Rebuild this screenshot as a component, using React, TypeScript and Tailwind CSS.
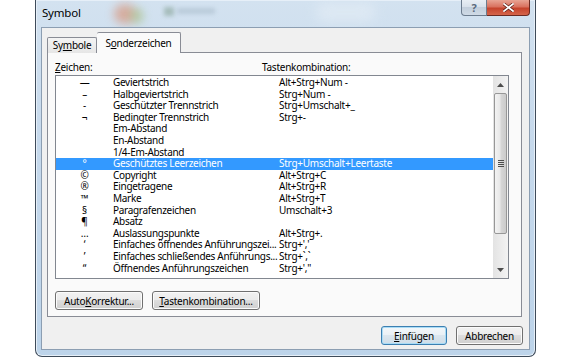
import React from 'react'

type Row = { sym: string; name: string; keys: string; selected?: boolean }

const rows: Row[] = [
  { sym: '—', name: 'Geviertstrich', keys: 'Alt+Strg+Num -' },
  { sym: '–', name: 'Halbgeviertstrich', keys: 'Strg+Num -' },
  { sym: '-', name: 'Geschützter Trennstrich', keys: 'Strg+Umschalt+_' },
  { sym: '¬', name: 'Bedingter Trennstrich', keys: 'Strg+-' },
  { sym: '', name: 'Em-Abstand', keys: '' },
  { sym: '', name: 'En-Abstand', keys: '' },
  { sym: '', name: '1/4-Em-Abstand', keys: '' },
  { sym: '°', name: 'Geschütztes Leerzeichen', keys: 'Strg+Umschalt+Leertaste', selected: true },
  { sym: '©', name: 'Copyright', keys: 'Alt+Strg+C' },
  { sym: '®', name: 'Eingetragene', keys: 'Alt+Strg+R' },
  { sym: '™', name: 'Marke', keys: 'Alt+Strg+T' },
  { sym: '§', name: 'Paragrafenzeichen', keys: 'Umschalt+3' },
  { sym: '¶', name: 'Absatz', keys: '' },
  { sym: '…', name: 'Auslassungspunkte', keys: 'Alt+Strg+.' },
  { sym: '‘', name: 'Einfaches öffnendes Anführungszei...', keys: "Strg+','" },
  { sym: '’', name: 'Einfaches schließendes Anführungs...', keys: 'Strg+`,`' },
  { sym: '“', name: 'Öffnendes Anführungszeichen', keys: 'Strg+\',"' },
]

const font = { fontFamily: '"Noto Sans", "Open Sans", sans-serif' }

function WinButton({ children, primary, className = '' }: { children: React.ReactNode; primary?: boolean; className?: string }) {
  return (
    <button
      className={`flex h-[19px] items-center justify-center rounded-[3px] border text-[10px] leading-none tracking-[-0.25px] text-black ${
        primary
          ? 'border-[#3c7fb1] bg-[linear-gradient(to_bottom,#f3f7fa_0%,#e9f0f5_50%,#dbe6ee_50%,#cfdde8_100%)] shadow-[inset_0_0_0_1px_#a9dcf6]'
          : 'border-[#707070] bg-[linear-gradient(to_bottom,#f2f2f2_0%,#ebebeb_50%,#dddddd_50%,#cfcfcf_100%)] shadow-[inset_0_0_0_1px_#fbfbfb]'
      } ${className}`}
    >
      {children}
    </button>
  )
}

export default function App() {
  return (
    <div className="relative h-[360px] w-[570px] overflow-hidden bg-white" style={font}>
      {/* Window */}
      <div className="relative ml-[35px] flex h-[357px] w-[501px] flex-col rounded-b-[7px] border border-t-0 border-[#3e4b5a] bg-[linear-gradient(to_bottom,#d3e2f0_0%,#c6d9ec_40%,#bdd4ea_100%)] shadow-[inset_0_0_0_1px_#e6eff8]">
        {/* Title bar */}
        <div className="relative h-[27px] shrink-0 overflow-hidden">
          <div className="absolute left-[78px] top-[4px] h-[20px] w-[22px] rounded-full bg-[#d98a6a] opacity-60 blur-[5px]" />
          <div className="absolute left-[94px] top-[8px] h-[16px] w-[14px] rounded-full bg-[#9fc07c] opacity-50 blur-[4px]" />
          <div className="absolute left-[128px] top-[7px] h-[9px] w-[10px] bg-[#7c9a8a] opacity-50 blur-[2px]" />
          <div className="absolute left-[141px] top-[8px] h-[6px] w-[38px] bg-[#a9bccb] opacity-60 blur-[2px]" />
          <div className="absolute left-[280px] top-[2px] h-[20px] w-[60px] rounded-full bg-[#e2ecf5] opacity-70 blur-[6px]" />
          <span className="absolute left-[6px] top-[5px] text-[11.5px] leading-[16px] tracking-[-0.2px] text-black">Symbol</span>
          <div className="absolute right-[5px] top-0 flex">
            <div className="flex h-[16px] w-[26px] items-center justify-center rounded-bl-[4px] border border-t-0 border-[#6c7c8e] bg-[linear-gradient(to_bottom,#e8eef4_0%,#d7e0ea_50%,#c3cfdc_50%,#cfdae6_100%)] text-[11px] font-bold leading-none text-[#5a6a7c]">
              ?
            </div>
            <div className="flex h-[16px] w-[43px] items-center justify-center rounded-br-[4px] border border-l-0 border-t-0 border-[#6b2a22] bg-[linear-gradient(to_bottom,#e8a494_0%,#d9725f_45%,#c5432c_55%,#d5654b_100%)]">
              <svg width="11" height="9" viewBox="0 0 11 9">
                <path d="M1 1 L10 8 M10 1 L1 8" stroke="#5a1c14" strokeWidth="3.2" strokeLinecap="square" />
                <path d="M1 1 L10 8 M10 1 L1 8" stroke="#ffffff" strokeWidth="1.8" strokeLinecap="square" />
              </svg>
            </div>
          </div>
        </div>

        {/* Client area */}
        <div className="mx-[5px] mb-[6px] flex flex-1 flex-col border border-[#8c9eb2] bg-[#f0f0f0] text-[10px] tracking-[-0.25px]">
          {/* Tabs */}
          <div className="ml-[5px] mt-[3px] flex h-[21px] items-end">
            <div className="relative top-[1px] flex h-[16px] w-[50px] items-center justify-center rounded-t-[2px] border border-b-0 border-[#898c95] bg-[linear-gradient(to_bottom,#f4f4f4_0%,#e6e6e6_100%)] text-black">
              <span>
                Sy<span className="underline">m</span>bole
              </span>
            </div>
            <div className="relative top-[1px] z-10 flex h-[21px] w-[84px] items-start justify-center rounded-t-[2px] border border-b-0 border-l-0 border-[#898c95] bg-[#fafafa] pt-[3px] text-black">
              <span>
                S<span className="underline">o</span>nderzeichen
              </span>
            </div>
          </div>

          {/* Tab panel */}
          <div className="ml-[5px] mr-[7px] flex h-[265px] flex-col border border-[#898c95] bg-[#fafafa] px-[7px] pt-[7px]">
            <div className="flex h-[15px] leading-[15px] text-black">
              <span className="w-[207px]">
                <span className="underline">Z</span>eichen:
              </span>
              <span>Tastenkombination:</span>
            </div>
            <div className="mr-[5px] flex h-[204px] border border-[#828790] bg-white">
              <div className="flex-1 pt-[1px] text-black">
                {rows.map((r, i) => (
                  <div
                    key={i}
                    className={`flex h-[11.6px] whitespace-nowrap leading-[11.6px] ${
                      r.selected ? 'bg-[#3399ff] text-white' : ''
                    }`}
                  >
                    <span className="w-[57px] text-center">{r.sym}</span>
                    <span className="w-[166px] tracking-[-0.3px]">{r.name}</span>
                    <span>{r.keys}</span>
                  </div>
                ))}
              </div>
              {/* Scrollbar */}
              <div className="flex w-[15px] flex-col bg-[linear-gradient(to_right,#e3e3e3,#f3f3f3)]">
                <div className="flex h-[17px] items-center justify-center">
                  <svg width="7" height="4" viewBox="0 0 7 4">
                    <path d="M0 4 L3.5 0 L7 4 Z" fill="#4d4d4d" />
                  </svg>
                </div>
                <div className="mx-[1px] flex h-[141px] items-center justify-center rounded-[2px] border border-[#979797] bg-[linear-gradient(to_right,#f3f3f3_0%,#e8e8e8_45%,#d6d6d6_55%,#cbcbcb_100%)]">
                  <div className="flex flex-col gap-[1px]">
                    <div className="h-px w-[6px] bg-[#4d4d4d]" />
                    <div className="h-px w-[6px] bg-[#4d4d4d]" />
                    <div className="h-px w-[6px] bg-[#4d4d4d]" />
                    <div className="h-px w-[6px] bg-[#4d4d4d]" />
                  </div>
                </div>
                <div className="flex-1" />
                <div className="flex h-[17px] items-center justify-center">
                  <svg width="7" height="4" viewBox="0 0 7 4">
                    <path d="M0 0 L3.5 4 L7 0 Z" fill="#4d4d4d" />
                  </svg>
                </div>
              </div>
            </div>
            <div className="mt-[12px] flex gap-[9px]">
              <WinButton className="w-[88px]">
                <span>
                  Auto<span className="underline">K</span>orrektur...
                </span>
              </WinButton>
              <WinButton className="w-[108px]">
                <span>
                  <span className="underline">T</span>astenkombination...
                </span>
              </WinButton>
            </div>
          </div>

          {/* Bottom buttons */}
          <div className="mr-[6px] mt-[9px] flex justify-end gap-[9px]">
            <WinButton primary className="w-[66px]">
              <span>
                <span className="underline">E</span>infügen
              </span>
            </WinButton>
            <WinButton className="w-[67px]">Abbrechen</WinButton>
          </div>
        </div>
      </div>
    </div>
  )
}
